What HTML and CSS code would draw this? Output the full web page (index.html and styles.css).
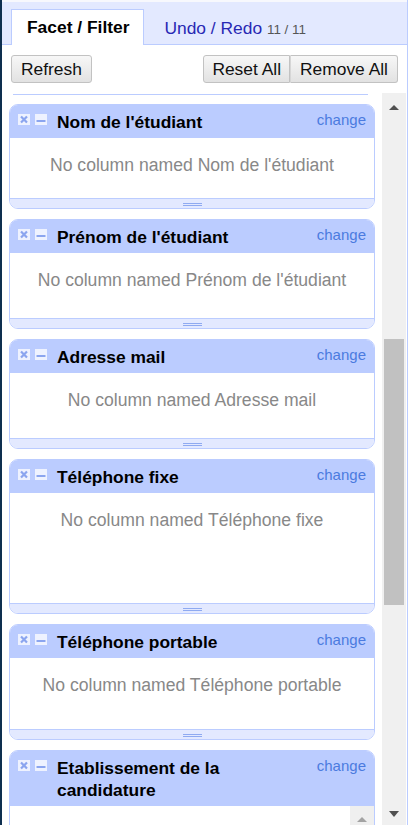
FILE: index.html
```html
<!DOCTYPE html>
<html lang="fr">
<head>
<meta charset="utf-8">
<title>Facet / Filter</title>
<link rel="stylesheet" href="styles.css">
</head>
<body>
<div class="edge"></div>
<div class="panel">
  <div class="tabs">
    <div class="tab active">Facet / Filter</div>
    <div class="tab link">Undo / Redo <span class="count">11 / 11</span></div>
  </div>
  <div class="toolbar">
    <button class="btn">Refresh</button>
    <div class="group">
      <button class="btn left">Reset All</button><button class="btn right">Remove All</button>
    </div>
  </div>
  <div class="scroller">
    <div class="list">
      <div class="stub"></div>

      <div class="facet">
        <div class="facet-title">
          <span class="ico"><svg width="12" height="11" viewBox="0 0 12 11"><rect width="12" height="11" fill="#eef2ff"/><path d="M3 2.5 L9 8.5 M9 2.5 L3 8.5" stroke="#8ba5ef" stroke-width="2.2"/></svg></span>
          <span class="ico"><svg width="12" height="11" viewBox="0 0 12 11"><rect width="12" height="11" fill="#eef2ff"/><rect x="1.5" y="6" width="9" height="2" fill="#8ba5ef"/></svg></span>
          <span class="name">Nom de l'étudiant</span>
          <span class="change">change</span>
        </div>
        <div class="facet-body b60">No column named Nom de l'étudiant</div>
        <div class="facet-foot"><span class="grip"></span></div>
      </div>

      <div class="facet">
        <div class="facet-title">
          <span class="ico"><svg width="12" height="11" viewBox="0 0 12 11"><rect width="12" height="11" fill="#eef2ff"/><path d="M3 2.5 L9 8.5 M9 2.5 L3 8.5" stroke="#8ba5ef" stroke-width="2.2"/></svg></span>
          <span class="ico"><svg width="12" height="11" viewBox="0 0 12 11"><rect width="12" height="11" fill="#eef2ff"/><rect x="1.5" y="6" width="9" height="2" fill="#8ba5ef"/></svg></span>
          <span class="name">Prénom de l'étudiant</span>
          <span class="change">change</span>
        </div>
        <div class="facet-body b65">No column named Prénom de l'étudiant</div>
        <div class="facet-foot"><span class="grip"></span></div>
      </div>

      <div class="facet">
        <div class="facet-title">
          <span class="ico"><svg width="12" height="11" viewBox="0 0 12 11"><rect width="12" height="11" fill="#eef2ff"/><path d="M3 2.5 L9 8.5 M9 2.5 L3 8.5" stroke="#8ba5ef" stroke-width="2.2"/></svg></span>
          <span class="ico"><svg width="12" height="11" viewBox="0 0 12 11"><rect width="12" height="11" fill="#eef2ff"/><rect x="1.5" y="6" width="9" height="2" fill="#8ba5ef"/></svg></span>
          <span class="name">Adresse mail</span>
          <span class="change">change</span>
        </div>
        <div class="facet-body b65">No column named Adresse mail</div>
        <div class="facet-foot"><span class="grip"></span></div>
      </div>

      <div class="facet">
        <div class="facet-title">
          <span class="ico"><svg width="12" height="11" viewBox="0 0 12 11"><rect width="12" height="11" fill="#eef2ff"/><path d="M3 2.5 L9 8.5 M9 2.5 L3 8.5" stroke="#8ba5ef" stroke-width="2.2"/></svg></span>
          <span class="ico"><svg width="12" height="11" viewBox="0 0 12 11"><rect width="12" height="11" fill="#eef2ff"/><rect x="1.5" y="6" width="9" height="2" fill="#8ba5ef"/></svg></span>
          <span class="name">Téléphone fixe</span>
          <span class="change">change</span>
        </div>
        <div class="facet-body b110">No column named Téléphone fixe</div>
        <div class="facet-foot"><span class="grip"></span></div>
      </div>

      <div class="facet">
        <div class="facet-title">
          <span class="ico"><svg width="12" height="11" viewBox="0 0 12 11"><rect width="12" height="11" fill="#eef2ff"/><path d="M3 2.5 L9 8.5 M9 2.5 L3 8.5" stroke="#8ba5ef" stroke-width="2.2"/></svg></span>
          <span class="ico"><svg width="12" height="11" viewBox="0 0 12 11"><rect width="12" height="11" fill="#eef2ff"/><rect x="1.5" y="6" width="9" height="2" fill="#8ba5ef"/></svg></span>
          <span class="name">Téléphone portable</span>
          <span class="change">change</span>
        </div>
        <div class="facet-body b71">No column named Téléphone portable</div>
        <div class="facet-foot"><span class="grip"></span></div>
      </div>

      <div class="facet">
        <div class="facet-title">
          <span class="ico"><svg width="12" height="11" viewBox="0 0 12 11"><rect width="12" height="11" fill="#eef2ff"/><path d="M3 2.5 L9 8.5 M9 2.5 L3 8.5" stroke="#8ba5ef" stroke-width="2.2"/></svg></span>
          <span class="ico"><svg width="12" height="11" viewBox="0 0 12 11"><rect width="12" height="11" fill="#eef2ff"/><rect x="1.5" y="6" width="9" height="2" fill="#8ba5ef"/></svg></span>
          <span class="name">Etablissement de la candidature</span>
          <span class="change">change</span>
        </div>
        <div class="facet-body list-body">
          <div class="choices"></div>
          <div class="inner-sb"><span class="tri-up light"></span></div>
        </div>
      </div>
    </div>
    <div class="scrollbar">
      <div class="sb-btn up"><span class="tri-up"></span></div>
      <div class="sb-track"><div class="sb-thumb"></div></div>
      <div class="sb-btn down"><span class="tri-down"></span></div>
    </div>
  </div>
</div>
</body>
</html>
```

FILE: styles.css
```css
html, body {
  margin: 0;
  padding: 0;
}
body {
  width: 408px;
  height: 825px;
  overflow: hidden;
  display: flex;
  font-family: "Liberation Sans", Arial, sans-serif;
  background: #fff;
  color: #000;
}
.edge {
  width: 2px;
  flex: none;
  background: #0e2f4f;
}
.panel {
  flex: 1;
  min-width: 0;
  display: flex;
  flex-direction: column;
  border-right: 1px solid #bbccff;
  background: #fff;
}

/* tabs */
.tabs {
  height: 42px;
  border-top: 2px solid #f7f8fd;
  border-bottom: 1px solid #bbccff;
  background: #e3e9ff;
  display: flex;
  align-items: flex-end;
  padding-left: 9px;
  flex: none;
}
.tab {
  height: 34px;
  line-height: 34px;
  padding: 0 15px;
  font-size: 17.4px;
  margin-bottom: -1px;
  border: 1px solid transparent;
  border-bottom: none;
}
.tab.active {
  background: #fff;
  border-color: #bbccff;
  font-weight: bold;
  height: 35px;
  padding: 0 14px 0 15px;
}
.tab.link {
  margin-left: 4px;
  color: #2828b4;
}
.count {
  font-size: 13.4px;
  color: #555;
}

/* toolbar */
.toolbar {
  flex: none;
  display: flex;
  justify-content: space-between;
  padding: 10px 9px;
}
.group {
  display: flex;
}
.btn {
  height: 28px;
  padding: 0 9px;
  font-family: "Liberation Sans", Arial, sans-serif;
  font-size: 17.4px;
  color: #111;
  background: linear-gradient(#f7f7f7, #e2e2e2);
  border: 1px solid #c2c2c2;
  border-radius: 3px;
}
.btn.left {
  border-radius: 3px 0 0 3px;
  padding: 0 8px;
}
.btn.right {
  border-radius: 0 3px 3px 0;
  border-left-color: #d6d6d6;
}

/* scroll area */
.scroller {
  flex: 1;
  min-height: 0;
  display: flex;
  overflow: hidden;
}
.list {
  flex: 1;
  min-width: 0;
  overflow: hidden;
}
.stub {
  height: 1px;
  width: 355px;
  margin: 1px 0 0 11px;
  background: #bbccff;
}

.facet {
  margin: 9px 7px 1px 7px;
  border: 1px solid #bbccff;
  border-radius: 9px;
  overflow: hidden;
}
.facet + .facet {
  margin-top: 10px;
}
.facet-title {
  display: flex;
  align-items: flex-start;
  background: #bbccff;
  padding: 6px 8px 5px 8px;
  line-height: 22px;
}
.ico {
  display: flex;
  margin-top: 3px;
  margin-right: 5px;
}
.ico svg {
  display: block;
}
.name {
  flex: 1;
  margin-left: 5px;
  font-size: 17.4px;
  font-weight: bold;
  color: #000;
}
.change {
  font-size: 15px;
  color: #4b7be0;
  margin-top: -2px;
  margin-left: 8px;
}
.facet-body {
  background: #fff;
  text-align: center;
  font-size: 17.6px;
  line-height: 20px;
  color: #888;
  padding-top: 17px;
  box-sizing: border-box;
}
.b60 { height: 60px; }
.b65 { height: 65px; }
.b71 { height: 71px; }
.b110 { height: 110px; }
.facet-foot {
  height: 9px;
  border-top: 1px solid #bbccff;
  background: #e3e9ff;
  display: flex;
  justify-content: center;
}
.grip {
  width: 19px;
  height: 1px;
  margin-top: 4px;
  border-top: 1px solid #8faaf1;
  border-bottom: 1px solid #8faaf1;
}
.list-body {
  padding-top: 0;
  height: 60px;
  display: flex;
}
.choices {
  flex: 1;
}
.inner-sb {
  width: 24px;
  background: #efefef;
  display: flex;
  justify-content: center;
  padding-top: 11px;
  box-sizing: border-box;
}

/* main scrollbar */
.scrollbar {
  width: 24px;
  margin-right: 1px;
  flex: none;
  background: #f0f0f0;
  display: flex;
  flex-direction: column;
}
.sb-btn {
  height: 24px;
  flex: none;
  display: flex;
  justify-content: center;
}
.sb-btn.up {
  padding-top: 12px;
  box-sizing: border-box;
}
.sb-btn.down {
  padding-top: 10px;
  box-sizing: border-box;
}
.sb-track {
  flex: 1;
  min-height: 0;
}
.sb-thumb {
  margin: 222px 2px 0 2px;
  height: 266px;
  background: #c1c1c1;
}
.tri-up {
  width: 0;
  height: 0;
  border-left: 5.5px solid transparent;
  border-right: 5.5px solid transparent;
  border-bottom: 5px solid #505050;
}
.tri-up.light {
  border-bottom-color: #a3a3a3;
}
.tri-down {
  width: 0;
  height: 0;
  border-left: 5.5px solid transparent;
  border-right: 5.5px solid transparent;
  border-top: 6px solid #505050;
}
```
